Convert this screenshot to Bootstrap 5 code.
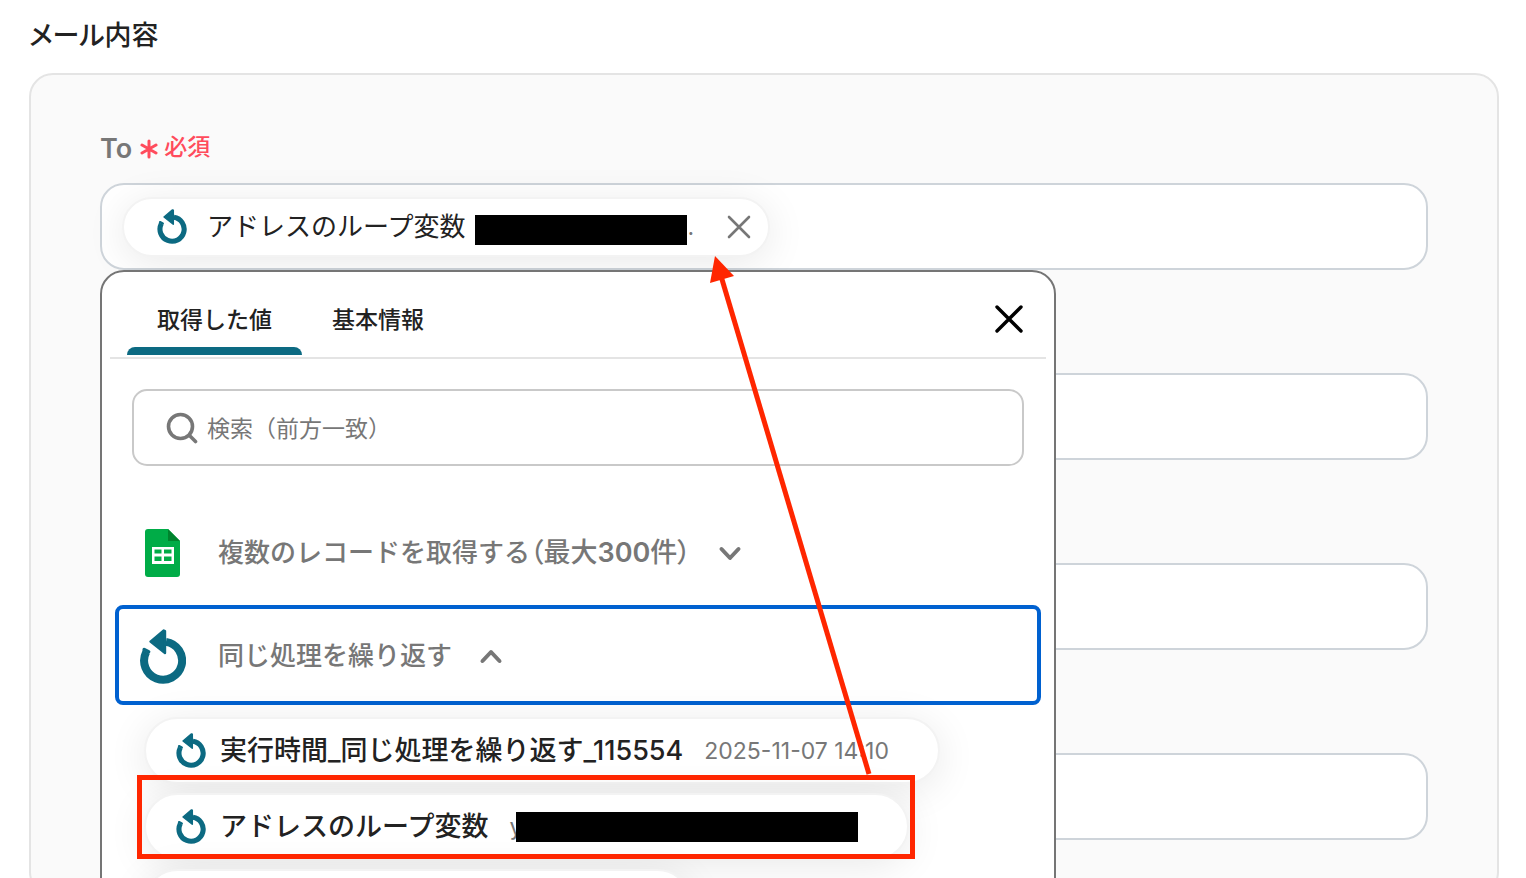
<!DOCTYPE html>
<html lang="ja">
<head>
<meta charset="utf-8">
<meta name="viewport" content="width=device-width, initial-scale=1">
<title>メール内容</title>
<link href="https://cdn.jsdelivr.net/npm/bootstrap@5.3.0/dist/css/bootstrap.min.css" rel="stylesheet">
<style>
  body { font-family: Inter, "Noto Sans CJK JP", sans-serif; font-size: 26px; line-height: 36px; color: #222; background: #fff; }
  svg { display: block; flex: none; }
  .page-main { padding: 17px 27px 0 29px; }
  .page-title { font-size: 27px; line-height: 38px; font-weight: 500; margin-bottom: 18px; }
  .mail-panel { background: #fafafa; border: 2px solid #e4e4e4; border-radius: 24px; padding: 54px 69px; }
  .to-label { font-size: 27px; line-height: 40px; font-weight: 600; color: #777; gap: 8px; margin-bottom: 14px; }
  .required-note { color: #ff4b5c; font-size: 23px; font-weight: 500; gap: 6px; }
  .required-note span { line-height: 36px; padding-bottom: 4px; }
  .field-stack { gap: 103px; }
  .field-box { min-height: 87px; width: 100%; background: #fff; border: 2px solid #ced4da; border-radius: 24px; padding: 0 20px; }
  .field-box input { border: 0; outline: 0; background: transparent; min-width: 0; }
  .chip { background: #fff; border: 2px solid #f3f3f3; border-radius: 40px; box-shadow: 0 6px 40px rgba(0,0,0,.09); white-space: nowrap; color: #222; }
  .chip-in { height: 60px; padding: 0 10px 0 33px; }
  .chip-in .chip-name { margin-right: 10px; }
  .chip-row { height: 67px; padding: 0 49px 0 30px; gap: 14px; font-size: 27px; font-weight: 500; }
  .chip-row .chip-value { margin-left: 7px; }
  .chip-value { color: #777; font-weight: 400; font-size: 23px; }
  .redacted { background: #000; height: 30px; display: inline-block; }
  .redact-a { width: 212px; margin-top: 6px; }
  .redact-b { width: 342px; }
  .over-text { margin-left: -6px; z-index: 1; }
  .bare { border: 0; background: transparent; padding: 0; }
  .picker { top: 100%; left: 0; width: 72%; background: #fff; border: 2px solid #757575; border-radius: 24px; z-index: 5; height: 900px; }
  .picker-tabs { margin: 0 8px; padding: 0 21px 0 17px; height: 87px; border-bottom: 2px solid #e4e4e4; }
  .picker-tab { position: relative; height: 83px; padding: 12px 30px 0; font-size: 23px; font-weight: 500; color: #222; }
  .picker-tab.active::after { content: ""; position: absolute; left: 0; right: 0; bottom: 0; height: 8px; background: #0c6a82; border-radius: 8px 8px 0 0; }
  .search-box { margin: 30px 30px 36px; height: 77px; border: 2px solid #c9c9c9; border-radius: 15px; padding: 0 32px; gap: 9px; }
  .search-box input { border: 0; outline: 0; background: transparent; font-size: 23px; color: #222; padding: 2px 0 0; }
  .search-box input::placeholder { color: #777; opacity: 1; }
  .groups { margin: 0 13px; gap: 3px; }
  .group-row { height: 100px; border: 4px solid transparent; border-radius: 8px; background: #fff; color: #777; font-weight: 500; padding: 2px 20px 0; text-align: left; }
  .group-row.current { border-color: #0061d0; }
  .group-icon { width: 47px; margin-right: 32px; display: flex; justify-content: center; }
  .group-row .chev { margin-left: 27px; }
  .tight { font-size: 27px; font-feature-settings: "palt"; }
  .value-list { margin: 12px 42px 0; gap: 9px; }
  .annotation { top: 0; left: 0; z-index: 10; pointer-events: none; }
</style>
<script src="https://cdn.jsdelivr.net/npm/bootstrap@5.3.0/dist/js/bootstrap.bundle.min.js"></script>
</head>
<body class="vh-100 overflow-hidden position-relative">
<svg width="0" height="0" class="position-absolute" aria-hidden="true">
  <symbol id="loop" viewBox="0 0 46 55">
    <path d="M6.200 23A19 19 0 1 0 26 12.900" fill="none" stroke="#0c6a82" stroke-width="8"/>
    <path d="M4.200 20.600L8.600 22.800" stroke="#0c6a82" stroke-width="3.600" stroke-linecap="round"/>
    <path d="M10.500 12.600L23.800 1.500L25 2V24Z" fill="#0c6a82" stroke="#0c6a82" stroke-width="2.400" stroke-linejoin="round"/>
  </symbol>
</svg>
<main class="page-main">
  <h1 class="page-title tight">メール内容</h1>
  <section class="mail-panel">
    <label for="to" class="to-label d-flex align-items-center">To
      <span class="required-note d-flex align-items-center">
        <svg width="18" height="20" viewBox="0 0 18 20" fill="none" stroke="#ff4b5c" stroke-width="3" stroke-linecap="round"><path d="M9 2V18M2 6L16 14M16 6L2 14"/></svg><span>必須</span></span>
    </label>
    <div class="field-stack d-flex flex-column">
      <div class="position-relative">
        <div class="field-box d-flex align-items-center">
          <div class="chip chip-in d-flex align-items-center">
            <svg width="30" height="35" class="me-3"><use href="#loop"/></svg>
            <span class="ms-1 chip-name">アドレスのループ変数</span>
            <span class="redacted redact-a"></span><span class="chip-value">.</span>
            <button type="button" class="bare ms-auto ps-4" aria-label="削除">
              <svg width="40" height="24" viewBox="0 0 40 24" fill="none" stroke="#777" stroke-width="2.600" stroke-linecap="round"><path d="M11 2L31 22M31 2L11 22"/></svg>
            </button>
          </div>
          <input id="to" type="text" class="flex-fill">
        </div>
        <div class="picker position-absolute">
          <div class="picker-tabs d-flex align-items-start" role="tablist">
            <button type="button" role="tab" class="bare picker-tab active" aria-selected="true">取得した値</button>
            <button type="button" role="tab" class="bare picker-tab" aria-selected="false">基本情報</button>
            <button type="button" class="bare ms-auto mt-3 pt-3" aria-label="閉じる">
              <svg width="32" height="30" viewBox="0 0 32 30" fill="none" stroke="#000" stroke-width="3.400" stroke-linecap="round"><path d="M4 3L28 27M28 3L4 27"/></svg>
            </button>
          </div>
          <div class="search-box d-flex align-items-center">
            <svg width="32" height="32" viewBox="0 0 32 32" fill="none" stroke="#777" stroke-width="3.600" stroke-linecap="round"><circle cx="14.500" cy="14.500" r="12"/><path d="M23.500 23.500L29.500 29.500"/></svg>
            <input type="search" class="flex-fill" placeholder="検索（前方一致）" aria-label="検索">
          </div>
          <div class="groups d-flex flex-column">
            <button type="button" class="group-row d-flex align-items-center" aria-expanded="false">
              <span class="group-icon"><svg width="35" height="48" viewBox="0 0 35 48"><path d="M3 0H23L35 12V45a3 3 0 0 1-3 3H3a3 3 0 0 1-3-3V3a3 3 0 0 1 3-3Z" fill="#00ac47"/><path d="M23 0L35 12H23Z" fill="#00832d"/><path fill="#fff" fill-rule="evenodd" d="M7 18H29V35H7ZM9.500 20.500V24.500H16.500V20.500ZM19 20.500V24.500H26.500V20.500ZM9.500 27.500V32H16.500V27.500ZM19 27.500V32H26.500V27.500Z"/></svg></span>
              複数のレコードを取得する<span class="tight">（最大<span class="fw-semibold">300</span>件）</span>
              <svg class="chev" width="24" height="16" viewBox="0 0 24 16" fill="none" stroke="#777" stroke-width="4" stroke-linecap="round" stroke-linejoin="round"><path d="M3.500 4L12 13L20.500 4"/></svg>
            </button>
            <button type="button" class="group-row current d-flex align-items-center" aria-expanded="true">
              <span class="group-icon"><svg width="46" height="55"><use href="#loop"/></svg></span>
              同じ処理を繰り返す
              <svg class="chev" width="24" height="16" viewBox="0 0 24 16" fill="none" stroke="#777" stroke-width="4" stroke-linecap="round" stroke-linejoin="round"><path d="M3.500 13L12 4L20.500 13"/></svg>
            </button>
          </div>
          <div class="value-list d-flex flex-column align-items-start">
            <button type="button" class="chip chip-row d-flex align-items-center">
              <svg width="30" height="35"><use href="#loop"/></svg><span>実行時間_同じ処理を繰り返す_115554</span><span class="chip-value">2025-11-07 14:10</span>
            </button>
            <button type="button" class="chip chip-row d-flex align-items-center">
              <svg width="30" height="35"><use href="#loop"/></svg>アドレスのループ変数<span class="chip-value d-flex align-items-center"><span>y</span><span class="redacted redact-b over-text"></span></span>
            </button>
            <button type="button" class="chip chip-row d-flex align-items-center" aria-label="値">
              <svg width="30" height="35"><use href="#loop"/></svg><span class="redacted redact-b"></span><span class="ps-3 pe-5"></span>
            </button>
          </div>
        </div>
      </div>
      <input type="text" class="field-box" aria-label="Cc">
      <input type="text" class="field-box" aria-label="Bcc">
      <input type="text" class="field-box" aria-label="件名">
    </div>
  </section>
</main>
<!-- red frame on the chosen value and an arrow up to the field it fills -->
<svg class="annotation position-absolute" width="1100" height="878" viewBox="0 0 1100 878" aria-hidden="true">
  <rect x="139.500" y="777.500" width="773" height="79" fill="none" stroke="#ff2600" stroke-width="5"/>
  <path d="M869 774L721 276" stroke="#ff2600" stroke-width="5"/>
  <path d="M715 256L734 276L710 283Z" fill="#ff2600"/>
</svg>
</body>
</html>
